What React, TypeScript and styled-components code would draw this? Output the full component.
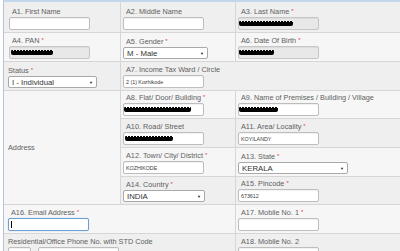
import React from 'react';
import styled, { createGlobalStyle } from 'styled-components';

const GlobalStyle = createGlobalStyle`
  html, body {
    margin: 0;
    padding: 0;
    background: #ffffff;
  }
  body {
    width: 400px;
    height: 251px;
    overflow: hidden;
    font-family: "Liberation Sans", Arial, sans-serif;
  }
`;

type Tone = 'dark' | 'light';

const Sheet = styled.div`
  display: grid;
  grid-template-columns: 116px 114px 1fr;
  grid-template-rows: 30px 28px 28px 27px 28px 28px 27px 28px 28px;
  gap: 1px;
  margin-left: 3px;
  background: #d6d6d6;
  border-top: 2px solid #c3d7eb;
  border-left: 1px solid #b3c3d3;
`;

const Cell = styled.div<{ $tone?: Tone; $pad?: number; $col?: string; $row?: string; $center?: boolean }>`
  display: flex;
  flex-direction: column;
  justify-content: ${p => (p.$center ? 'center' : 'flex-end')};
  gap: 1px;
  min-width: 0;
  padding: 0 0 ${p => (p.$center ? 0 : 2)}px ${p => p.$pad ?? 2}px;
  background: ${p => (p.$tone === 'light' ? '#f6f6f6' : '#efefef')};
  grid-column: ${p => p.$col ?? 'auto'};
  grid-row: ${p => p.$row ?? 'auto'};
`;

const Label = styled.div<{ $indent?: boolean }>`
  font-size: 7.3px;
  line-height: 9px;
  color: #616161;
  white-space: nowrap;
  padding-left: ${p => (p.$indent ? 3 : 0)}px;
`;

const Star = styled.span`
  color: #e23b3b;
  font-size: 6px;
  margin-left: 2px;
  vertical-align: top;
`;

const TextBox = styled.div<{ $disabled?: boolean; $focused?: boolean; $width?: number }>`
  box-sizing: border-box;
  width: ${p => p.$width ?? 81}px;
  height: 13px;
  display: flex;
  align-items: center;
  padding: 0 2px;
  border: 1px solid ${p => (p.$focused ? '#6b9fd6' : p.$disabled ? '#c6c6c6' : '#bdbdbd')};
  border-radius: 2px;
  background: ${p => (p.$disabled ? '#e8e8e8' : '#ffffff')};
  box-shadow: ${p => (p.$focused ? '0 0 1px #9cc2ea' : 'inset 0 1px 1px rgba(0, 0, 0, 0.06)')};
  font-size: 5.3px;
  color: #3a3a3a;
  white-space: nowrap;
`;

const Select = styled.div<{ $width: number }>`
  box-sizing: border-box;
  width: ${p => p.$width}px;
  height: 12px;
  display: flex;
  align-items: center;
  justify-content: space-between;
  padding: 0 3px;
  border: 1px solid #a9a9a9;
  border-radius: 2px;
  background: #ffffff;
  font-size: 7.8px;
  color: #333333;
  white-space: nowrap;
`;

const Caret = styled.span`
  font-size: 4px;
  color: #222222;
`;

const Redacted = styled.span<{ $width: number; $offset?: number }>`
  display: block;
  width: ${p => p.$width}px;
  height: 5px;
  margin-left: ${p => (p.$offset ?? 0) - 2}px;
  background:
    repeating-linear-gradient(90deg, #000 0 2px, transparent 2px 3px) top / 100% 1px no-repeat,
    linear-gradient(#000, #000) bottom / 100% 4px no-repeat;
  border-radius: 1px 1px 2px 2px;
`;

const Cursor = styled.span`
  display: block;
  width: 1px;
  height: 7px;
  background: #000000;
`;

const AddressText = styled.div`
  font-size: 7.3px;
  line-height: 9px;
  color: #616161;
`;

const PhoneRow = styled.div`
  display: flex;
  gap: 7px;
`;

const Req = () => <Star>*</Star>;

const App: React.FC = () => {
  return (
    <>
      <GlobalStyle />
      <Sheet>
        <Cell $pad={5}>
          <Label $indent>A1. First Name</Label>
          <TextBox />
        </Cell>
        <Cell>
          <Label $indent>A2. Middle Name</Label>
          <TextBox />
        </Cell>
        <Cell>
          <Label $indent>A3. Last Name<Req /></Label>
          <TextBox $disabled>
            <Redacted $width={54} />
          </TextBox>
        </Cell>

        <Cell $tone="light" $pad={5}>
          <Label $indent>A4. PAN<Req /></Label>
          <TextBox $disabled>
            <Redacted $width={42} $offset={1} />
          </TextBox>
        </Cell>
        <Cell $tone="light">
          <Label $indent>A5. Gender<Req /></Label>
          <Select $width={85}>
            M - Male<Caret>▼</Caret>
          </Select>
        </Cell>
        <Cell $tone="light">
          <Label $indent>A6. Date Of Birth<Req /></Label>
          <TextBox $disabled>
            <Redacted $width={35} />
          </TextBox>
        </Cell>

        <Cell $pad={4}>
          <Label>Status<Req /></Label>
          <Select $width={89}>
            I - Individual<Caret>▼</Caret>
          </Select>
        </Cell>
        <Cell $col="2 / span 2">
          <Label $indent>A7. Income Tax Ward / Circle</Label>
          <TextBox>2 (1) Kozhikode</TextBox>
        </Cell>

        <Cell $tone="light" $pad={4} $row="4 / span 4" $center>
          <AddressText>Address</AddressText>
        </Cell>
        <Cell $tone="light">
          <Label $indent>A8. Flat/ Door/ Building<Req /></Label>
          <TextBox>
            <Redacted $width={67} />
          </TextBox>
        </Cell>
        <Cell $tone="light">
          <Label $indent>A9. Name of Premises / Building / Village</Label>
          <TextBox>
            <Redacted $width={39} />
          </TextBox>
        </Cell>

        <Cell>
          <Label $indent>A10. Road/ Street</Label>
          <TextBox>
            <Redacted $width={48} $offset={1} />
          </TextBox>
        </Cell>
        <Cell>
          <Label $indent>A11. Area/ Locality<Req /></Label>
          <TextBox>KOYILANDY</TextBox>
        </Cell>

        <Cell $tone="light">
          <Label $indent>A12. Town/ City/ District<Req /></Label>
          <TextBox>KOZHIKODE</TextBox>
        </Cell>
        <Cell $tone="light">
          <Label $indent>A13. State<Req /></Label>
          <Select $width={110}>
            KERALA<Caret>▼</Caret>
          </Select>
        </Cell>

        <Cell>
          <Label $indent>A14. Country<Req /></Label>
          <Select $width={82}>
            INDIA<Caret>▼</Caret>
          </Select>
        </Cell>
        <Cell>
          <Label $indent>A15. Pincode<Req /></Label>
          <TextBox>673612</TextBox>
        </Cell>

        <Cell $tone="light" $pad={4} $col="1 / span 2">
          <Label $indent>A16. Email Address<Req /></Label>
          <TextBox $focused>
            <Cursor />
          </TextBox>
        </Cell>
        <Cell $tone="light">
          <Label $indent>A17. Mobile No. 1<Req /></Label>
          <TextBox />
        </Cell>

        <Cell $pad={4} $col="1 / span 2">
          <Label>Residential/Office Phone No. with STD Code</Label>
          <PhoneRow>
            <TextBox $width={23} />
            <TextBox $width={81} />
          </PhoneRow>
        </Cell>
        <Cell>
          <Label $indent>A18. Mobile No. 2</Label>
          <TextBox />
        </Cell>
      </Sheet>
    </>
  );
};

export default App;
